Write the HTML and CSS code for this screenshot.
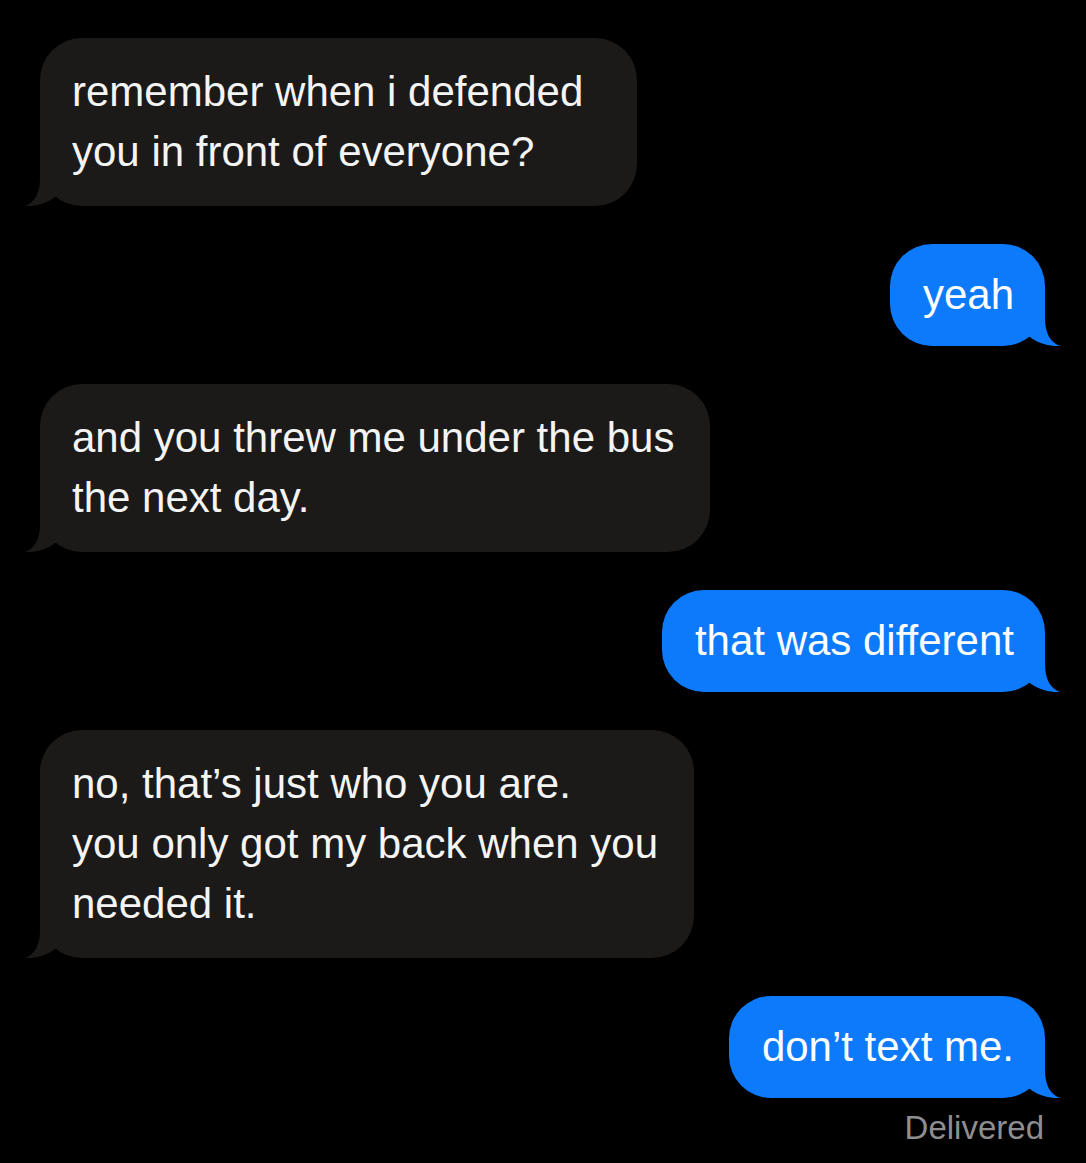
FILE: index.html
```html
<!DOCTYPE html>
<html lang="en">
<head>
<meta charset="utf-8">
<title>Messages</title>
<link rel="stylesheet" href="styles.css">
</head>
<body>
<main class="thread">
  <div class="bubble in wide">remember when i defended<br>you in front of everyone?<svg class="tail" viewBox="0 0 60 44" aria-hidden="true"><path d="M16,0 L16,16 C16,32 10,41 1,44 C10,45 24,41 31,35 L60,35 L60,0 Z"/></svg></div>
  <div class="bubble out">yeah<svg class="tail" viewBox="0 0 60 44" aria-hidden="true"><path d="M16,0 L16,16 C16,32 10,41 1,44 C10,45 24,41 31,35 L60,35 L60,0 Z"/></svg></div>
  <div class="bubble in">and you threw me under the bus<br>the next day.<svg class="tail" viewBox="0 0 60 44" aria-hidden="true"><path d="M16,0 L16,16 C16,32 10,41 1,44 C10,45 24,41 31,35 L60,35 L60,0 Z"/></svg></div>
  <div class="bubble out">that was different<svg class="tail" viewBox="0 0 60 44" aria-hidden="true"><path d="M16,0 L16,16 C16,32 10,41 1,44 C10,45 24,41 31,35 L60,35 L60,0 Z"/></svg></div>
  <div class="bubble in">no, that’s just who you are.<br>you only got my back when you<br>needed it.<svg class="tail" viewBox="0 0 60 44" aria-hidden="true"><path d="M16,0 L16,16 C16,32 10,41 1,44 C10,45 24,41 31,35 L60,35 L60,0 Z"/></svg></div>
  <div class="last">
    <div class="bubble out">don’t text me.<svg class="tail" viewBox="0 0 60 44" aria-hidden="true"><path d="M16,0 L16,16 C16,32 10,41 1,44 C10,45 24,41 31,35 L60,35 L60,0 Z"/></svg></div>
    <div class="status">Delivered</div>
  </div>
</main>
</body>
</html>
```

FILE: styles.css
```css
html, body {
  margin: 0;
  background: #000;
}

.thread {
  display: flex;
  flex-direction: column;
  gap: 38px;
  padding: 38px 41px 0 40px;
  font-family: "Liberation Sans", Arial, sans-serif;
}

.bubble {
  position: relative;
  z-index: 0;
  width: fit-content;
  border-radius: 42px;
  font-size: 42px;
  line-height: 60px;
  color: #f4f4f4;
}

/* the tail sits under the text, flush with the bubble's bottom edge */
.tail {
  position: absolute;
  bottom: 0;
  left: -16px;
  width: 60px;
  height: 44px;
  z-index: -1;
  fill: currentColor;
}

/* received: dark grey, tail bottom-left */
.bubble.in {
  align-self: flex-start;
  background: #1b1a19;
  padding: 24px 36px 24px 32px;
}

.bubble.in .tail {
  color: #1b1a19;
}

.bubble.in.wide {
  padding-right: 54px;
}

/* sent: blue, tail bottom-right */
.bubble.out {
  align-self: flex-end;
  background: #0d79fb;
  color: #fbfdff;
  padding: 21px 31px 21px 33px;
}

.bubble.out .tail {
  left: auto;
  right: -16px;
  color: #0d79fb;
  transform: scaleX(-1);
}

.last {
  display: flex;
  flex-direction: column;
  align-items: flex-end;
}

.status {
  margin-top: 12px;
  margin-right: 1px;
  font-size: 33px;
  line-height: 36px;
  color: #8e8e90;
}
```
